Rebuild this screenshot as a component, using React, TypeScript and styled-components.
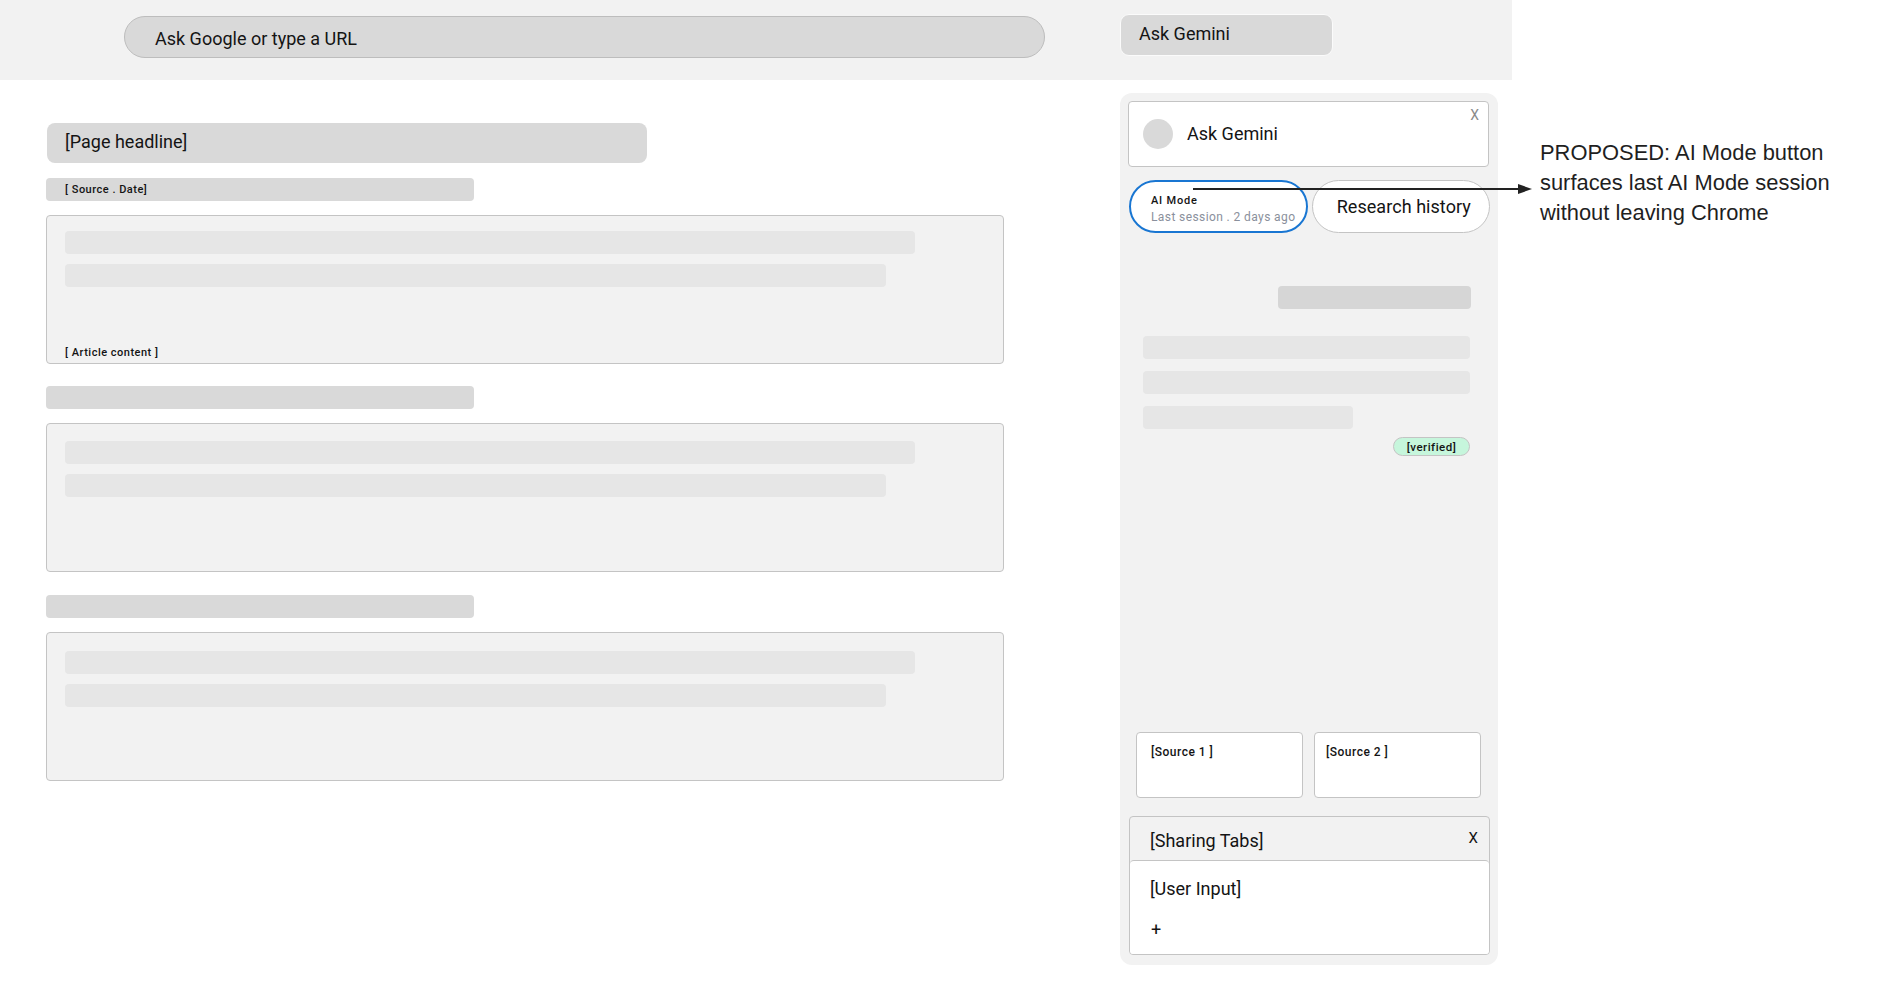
import React from 'react'
import styled, { createGlobalStyle } from 'styled-components'

const GlobalStyle = createGlobalStyle`
    html, body {
        margin: 0;
        padding: 0;
        background: #ffffff;
        font-family: Roboto, "Liberation Sans", sans-serif;
        color: #141414;
    }
    * {
        box-sizing: border-box;
    }
`

const Page = styled.div`
    position: relative;
    width: 1892px;
    height: 982px;
    overflow: hidden;
`

const BrowserBar = styled.header`
    display: flex;
    align-items: flex-start;
    width: 1512px;
    height: 80px;
    padding: 14px 0 0 124px;
    background: #f2f2f2;
`

const Omnibox = styled.div`
    display: flex;
    align-items: center;
    width: 921px;
    height: 42px;
    margin-top: 2px;
    padding: 3px 0 0 30px;
    border: 1px solid #bdbdbd;
    border-radius: 21px;
    background: #d9d9d9;
    font-size: 18px;
`

const GeminiButton = styled.div`
    display: flex;
    align-items: center;
    width: 213px;
    height: 42px;
    margin-left: 75px;
    padding: 0 0 3px 18px;
    border: 1px solid #fbfbfb;
    border-radius: 9px;
    background: #d9d9d9;
    font-size: 18px;
`

const Workspace = styled.div`
    display: flex;
    align-items: flex-start;
`

const Article = styled.main`
    display: flex;
    flex-direction: column;
    width: 1004px;
    padding: 43px 0 0 46px;
`

const Headline = styled.div`
    display: flex;
    align-items: center;
    width: 600px;
    height: 40px;
    margin-left: 1px;
    padding: 0 0 3px 18px;
    border-radius: 8px;
    background: #d9d9d9;
    font-size: 18px;
`

const MetaBar = styled.div<{ $top: number }>`
    display: flex;
    align-items: center;
    width: 428px;
    height: 23px;
    margin-top: ${({ $top }) => $top}px;
    padding-left: 19px;
    border-radius: 4px;
    background: #d9d9d9;
    font-size: 11px;
    font-weight: 500;
    letter-spacing: 0.5px;
`

const ArticleBox = styled.section<{ $inset: number }>`
    display: flex;
    flex-direction: column;
    gap: 10px;
    width: 958px;
    height: 149px;
    margin-top: 14px;
    padding: ${({ $inset }) => $inset}px 0 0 18px;
    border: 1px solid #c4c4c4;
    border-radius: 4px;
    background: #f2f2f2;
`

const SkeletonLine = styled.div<{ $width: number }>`
    width: ${({ $width }) => $width}px;
    height: 23px;
    border-radius: 4px;
    background: #e6e6e6;
`

const BoxCaption = styled.span`
    margin-top: auto;
    padding-bottom: 4px;
    font-size: 11px;
    font-weight: 500;
    letter-spacing: 0.5px;
    line-height: 13px;
`

const Panel = styled.aside`
    display: flex;
    flex-direction: column;
    width: 378px;
    height: 872px;
    margin: 13px 0 0 116px;
    padding: 8px 8px 10px 8px;
    border-radius: 12px;
    background: #f2f2f2;
`

const PanelHeader = styled.div`
    position: relative;
    display: flex;
    align-items: center;
    gap: 14px;
    width: 361px;
    height: 66px;
    padding: 0 0 2px 14px;
    border: 1px solid #c4c4c4;
    border-radius: 4px;
    background: #ffffff;
    font-size: 18px;
`

const Avatar = styled.span`
    width: 30px;
    height: 30px;
    margin-top: 2px;
    border-radius: 50%;
    background: #d9d9d9;
`

const CloseMark = styled.span`
    position: absolute;
    top: 5px;
    right: 9px;
    color: #8a8a8a;
    font-size: 14px;
`

const TabRow = styled.div`
    display: flex;
    gap: 4px;
    margin: 13px 0 0 1px;
`

const ModeTab = styled.div`
    display: flex;
    flex-direction: column;
    justify-content: center;
    width: 179px;
    height: 53px;
    padding: 5px 0 0 20px;
    border: 2px solid #1976d2;
    border-radius: 27px;
    background: #ffffff;
`

const ModeTitle = styled.span`
    font-size: 11px;
    font-weight: 500;
    line-height: 16px;
    letter-spacing: 0.8px;
`

const ModeSub = styled.span`
    color: #8a909c;
    font-size: 12px;
    line-height: 16px;
    letter-spacing: 0.4px;
    white-space: nowrap;
`

const HistoryTab = styled.div`
    display: flex;
    align-items: center;
    justify-content: center;
    width: 179px;
    height: 53px;
    padding-left: 6px;
    border: 1px solid #c4c4c4;
    border-radius: 27px;
    background: #ffffff;
    font-size: 18px;
    letter-spacing: 0.05px;
`

const Chat = styled.div`
    display: flex;
    flex-direction: column;
    align-items: flex-end;
    width: 343px;
    margin-top: 53px;
`

const UserBubble = styled.div`
    width: 193px;
    height: 23px;
    border-radius: 4px;
    background: #d6d6d6;
`

const Answer = styled.div`
    display: flex;
    flex-direction: column;
    gap: 12px;
    width: 328px;
    margin-top: 27px;
`

const VerifiedTag = styled.span`
    display: flex;
    align-items: center;
    justify-content: center;
    width: 77px;
    height: 19px;
    margin: 8px 1px 0 0;
    padding-top: 1px;
    border: 1px solid #c4c4c4;
    border-radius: 10px;
    background: #c6f6dc;
    font-size: 11.5px;
    font-weight: 500;
    letter-spacing: 0.5px;
`

const Sources = styled.div`
    display: flex;
    gap: 11px;
    margin: auto 0 0 8px;
`

const SourceCard = styled.div<{ $inset: number }>`
    width: 167px;
    height: 66px;
    padding: 12px 0 0 ${({ $inset }) => $inset}px;
    border: 1px solid #c4c4c4;
    border-radius: 4px;
    background: #ffffff;
    font-size: 12px;
    font-weight: 500;
    line-height: 14px;
    letter-spacing: 0.5px;
`

const Composer = styled.div`
    width: 361px;
    height: 139px;
    margin: 18px 0 0 1px;
    border: 1px solid #c4c4c4;
    border-radius: 4px;
    overflow: hidden;
`

const ComposerHead = styled.div`
    display: flex;
    align-items: center;
    justify-content: space-between;
    height: 43px;
    padding: 3px 11px 0 20px;
    font-size: 18px;
`

const HeadClose = styled.span`
    margin-bottom: 4px;
    font-size: 15px;
`

const ComposerBody = styled.div`
    display: flex;
    flex-direction: column;
    height: 95px;
    padding: 17px 20px 0;
    border-top: 1px solid #c4c4c4;
    border-radius: 4px;
    background: #ffffff;
    font-size: 18px;
`

const PlusMark = styled.span`
    margin: 20px 0 0 1px;
    font-size: 18px;
`

const Annotation = styled.p`
    width: 330px;
    margin: 58px 0 0 42px;
    color: #1f1f1f;
    font-family: "Liberation Sans", Arial, sans-serif;
    font-size: 21.9px;
    line-height: 30px;
`

const ArrowOverlay = styled.svg`
    position: absolute;
    top: 180px;
    left: 1190px;
`

function ArticleSection({ inset, caption }: { inset: number; caption?: string }) {
    return (
        <ArticleBox $inset={inset}>
            <SkeletonLine $width={850} />
            <SkeletonLine $width={821} />
            {caption && <BoxCaption>{caption}</BoxCaption>}
        </ArticleBox>
    )
}

export default function App() {
    return (
        <Page>
            <GlobalStyle />
            <BrowserBar>
                <Omnibox>Ask Google or type a URL</Omnibox>
                <GeminiButton>Ask Gemini</GeminiButton>
            </BrowserBar>
            <Workspace>
                <Article>
                    <Headline>[Page headline]</Headline>
                    <MetaBar $top={15}>[ Source . Date]</MetaBar>
                    <ArticleSection inset={15} caption="[ Article content ]" />
                    <MetaBar $top={22} />
                    <ArticleSection inset={17} />
                    <MetaBar $top={23} />
                    <ArticleSection inset={18} />
                </Article>
                <Panel>
                    <PanelHeader>
                        <Avatar />
                        Ask Gemini
                        <CloseMark>X</CloseMark>
                    </PanelHeader>
                    <TabRow>
                        <ModeTab>
                            <ModeTitle>AI Mode</ModeTitle>
                            <ModeSub>Last session . 2 days ago</ModeSub>
                        </ModeTab>
                        <HistoryTab>Research history</HistoryTab>
                    </TabRow>
                    <Chat>
                        <UserBubble />
                        <Answer>
                            <SkeletonLine $width={327} />
                            <SkeletonLine $width={327} />
                            <SkeletonLine $width={210} />
                        </Answer>
                        <VerifiedTag>[verified]</VerifiedTag>
                    </Chat>
                    <Sources>
                        <SourceCard $inset={14}>[Source 1 ]</SourceCard>
                        <SourceCard $inset={11}>[Source 2 ]</SourceCard>
                    </Sources>
                    <Composer>
                        <ComposerHead>
                            [Sharing Tabs]
                            <HeadClose>X</HeadClose>
                        </ComposerHead>
                        <ComposerBody>
                            [User Input]
                            <PlusMark>+</PlusMark>
                        </ComposerBody>
                    </Composer>
                </Panel>
                <Annotation>
                    PROPOSED: AI Mode button surfaces last AI Mode session without leaving Chrome
                </Annotation>
            </Workspace>
            <ArrowOverlay width="345" height="20" viewBox="0 0 345 20">
                <line x1="3" y1="9" x2="330" y2="9" stroke="#222222" strokeWidth="1.8" />
                <polygon points="328,4 342,9 328,14" fill="#222222" />
            </ArrowOverlay>
        </Page>
    )
}
